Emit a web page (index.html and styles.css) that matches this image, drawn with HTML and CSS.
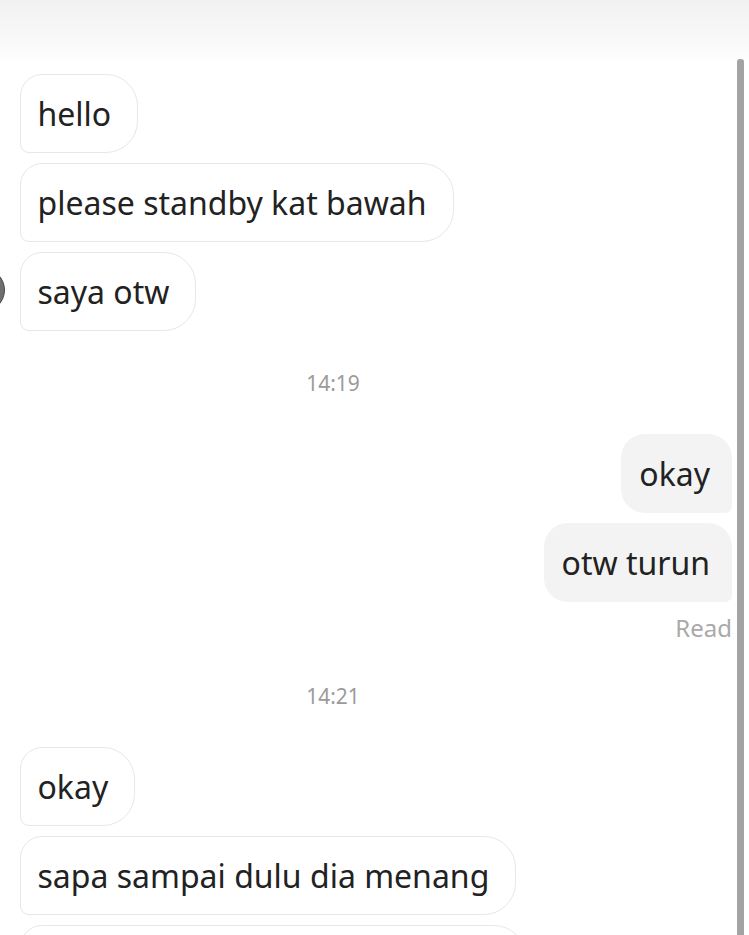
FILE: index.html
```html
<!DOCTYPE html>
<html lang="ms">
<head>
<meta charset="utf-8">
<title>Chat</title>
<link rel="stylesheet" href="styles.css">
</head>
<body>
<div class="screen">
  <header class="topbar"></header>
  <div class="avatar"></div>
  <div class="scrollthumb"></div>
  <main class="chat">
    <div class="msg in">hello</div>
    <div class="msg in">please standby kat bawah</div>
    <div class="msg in">saya otw</div>
    <div class="time">14:19</div>
    <div class="msg out">okay</div>
    <div class="msg out">otw turun</div>
    <div class="status">Read</div>
    <div class="time">14:21</div>
    <div class="msg in">okay</div>
    <div class="msg in">sapa sampai dulu dia menang</div>
    <div class="msg in partial"></div>
  </main>
</div>
</body>
</html>
```
FILE: styles.css
```css
html, body {
  margin: 0;
  padding: 0;
  background: #ffffff;
}
body {
  width: 749px;
  height: 935px;
  overflow: hidden;
  font-family: "Noto Sans", "Open Sans", sans-serif;
  color: #222222;
}
.screen {
  position: relative;
  width: 749px;
  height: 935px;
  overflow: hidden;
}
.topbar {
  height: 60px;
  background: linear-gradient(to bottom, #f1f1f1 0%, #f8f8f8 60%, #fdfdfd 100%);
}
.chat {
  display: flex;
  flex-direction: column;
  align-items: flex-start;
  padding: 14px 17px 0 20px;
}
.msg {
  box-sizing: border-box;
  height: 79px;
  display: flex;
  align-items: center;
  font-size: 32px;
  line-height: 1.36;
  white-space: nowrap;
  margin-top: 10px;
}
.chat > .msg:first-child,
.time + .msg {
  margin-top: 0;
}
.msg.in {
  background: #ffffff;
  border: 1.5px solid #e7e7e7;
  border-radius: 22px 32px 32px 9px;
  padding: 0 26px 0 16.5px;
}
.msg.partial {
  width: 506px;
}
.msg.out {
  align-self: flex-end;
  background: #f3f3f3;
  border-radius: 24px 24px 7px 24px;
  padding: 0 22px 0 18px;
}
.time {
  align-self: stretch;
  height: 103px;
  display: flex;
  align-items: center;
  justify-content: center;
  font-size: 21px;
  color: #9b9b9b;
  padding-right: 86px;
}
.status {
  align-self: flex-end;
  box-sizing: border-box;
  height: 42px;
  padding-top: 11px;
  font-size: 24px;
  line-height: 30px;
  color: #a9a9a9;
}
.avatar {
  position: absolute;
  left: -39px;
  top: 268px;
  width: 44px;
  height: 44px;
  border-radius: 50%;
  background: #6f6f6f;
  border: 1px solid #4a4a4a;
  box-sizing: border-box;
}
.scrollthumb {
  position: absolute;
  left: 737px;
  top: 59px;
  width: 7px;
  height: 900px;
  border-radius: 3px 3px 0 0;
  background: #a3a3a3;
}
```
